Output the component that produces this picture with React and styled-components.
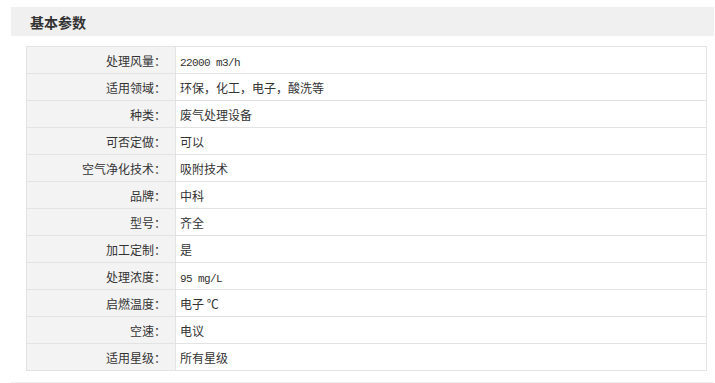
import styled, { createGlobalStyle } from "styled-components";

const GlobalStyle = createGlobalStyle`
  body {
    margin: 0;
    background: #fff;
    font-family: "Noto Sans CJK SC", "Liberation Sans", sans-serif;
    color: #333;
  }
`;

const Page = styled.div`
  padding: 7px 1px 0 11px;
`;

const Header = styled.div`
  height: 29px;
  background: #f0f0f0;
  display: flex;
  align-items: center;
  padding-left: 19px;
`;

const Title = styled.h2`
  margin: 0;
  font-size: 14px;
  font-weight: bold;
  color: #333;
`;

const Params = styled.table`
  margin: 10px 7px 0 15px;
  width: 681px;
  border-collapse: collapse;
  font-size: 12px;
  table-layout: fixed;
`;

const Row = styled.tr`
  height: 27px;
`;

const Label = styled.th`
  width: 139px;
  padding: 0 9px 0 0;
  text-align: right;
  font-weight: normal;
  background: #f3f3f3;
  border: 1px solid #e3e3e3;
  color: #333;
`;

const Value = styled.td`
  padding: 0 0 0 4px;
  text-align: left;
  border: 1px solid #e3e3e3;
  background: #fff;
  color: #333;
`;

const Latin = styled.span`
  font-family: "Liberation Mono", monospace;
  font-size: 11px;
  letter-spacing: -0.6px;
`;

const Footer = styled.div`
  margin-top: 11px;
  height: 10px;
  background: #f0f0f0;
`;

const params = [
  ["处理风量：", <Latin>22000 m3/h</Latin>],
  ["适用领域：", "环保，化工，电子，酸洗等"],
  ["种类：", "废气处理设备"],
  ["可否定做：", "可以"],
  ["空气净化技术：", "吸附技术"],
  ["品牌：", "中科"],
  ["型号：", "齐全"],
  ["加工定制：", "是"],
  ["处理浓度：", <Latin>95 mg/L</Latin>],
  ["启燃温度：", "电子 ℃"],
  ["空速：", "电议"],
  ["适用星级：", "所有星级"],
];

export default function App() {
  return (
    <>
      <GlobalStyle />
      <Page>
        <Header>
          <Title>基本参数</Title>
        </Header>
        <Params>
          <tbody>
            {params.map(([label, value], i) => (
              <Row key={i}>
                <Label>{label}</Label>
                <Value>{value}</Value>
              </Row>
            ))}
          </tbody>
        </Params>
        <Footer />
      </Page>
    </>
  );
}
